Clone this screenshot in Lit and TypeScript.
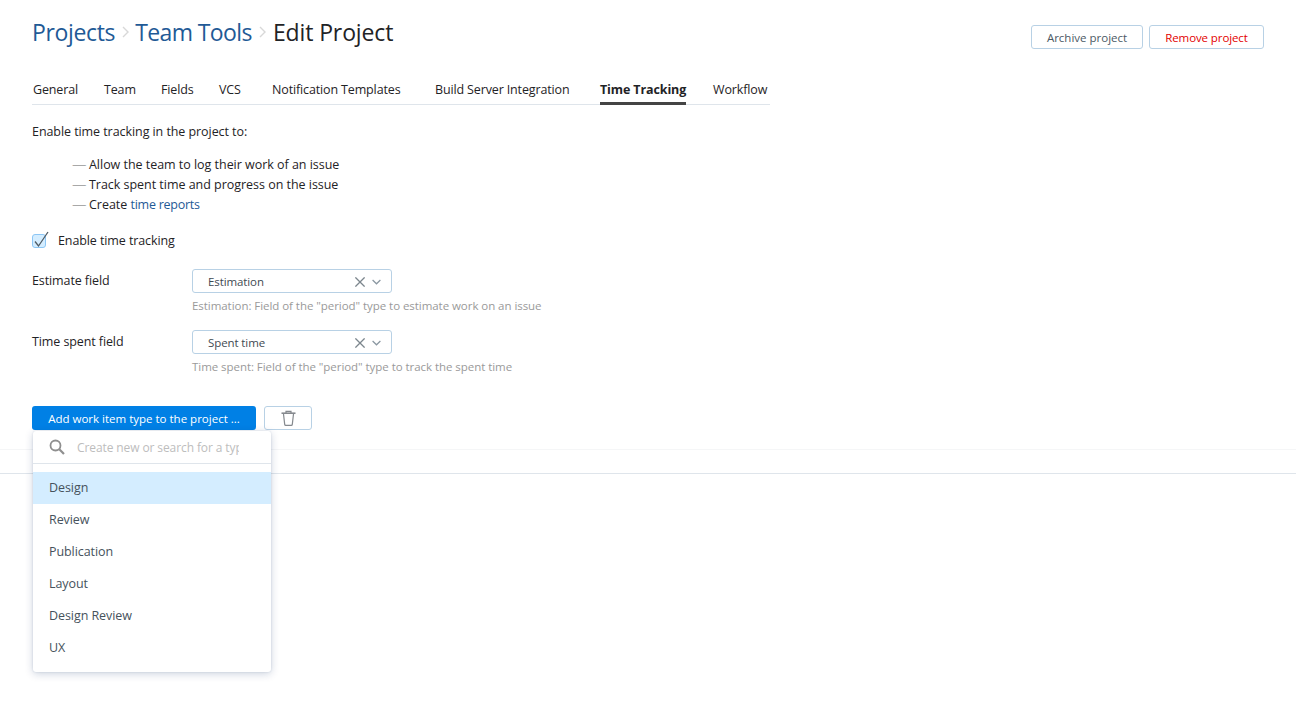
import { LitElement, html, css } from "lit";
import { customElement } from "lit/decorators.js";

const tabs: [string, number][] = [
  ["General", 71], ["Team", 57], ["Fields", 58], ["VCS", 53], ["Notification Templates", 163],
  ["Build Server Integration", 165], ["Time Tracking", 113], ["Workflow", 57],
];

@customElement("app-root")
export class AppRoot extends LitElement {
  static styles = css`
    :host { display: block; height: 707px; position: relative; overflow: hidden; background: #fff;
      font-family: "Open Sans", "Noto Sans", sans-serif; font-size: 12.5px; color: #1f2326; letter-spacing: -0.07px; }
    a { color: #1f5a96; text-decoration: none; }
    .content { padding: 0 32px; }
    .header { display: flex; justify-content: space-between; height: 50px; }
    .crumbs { display: flex; align-items: center; height: 32px; margin-top: 16px; font-size: 23px; letter-spacing: -0.35px; white-space: nowrap; }
    .crumbs svg { margin: 0 7px 0 7px; }
    .crumbs .mid { letter-spacing: -0.6px; margin-left: -1px; }
    .crumbs .last { letter-spacing: -0.12px; }
    .actions { display: flex; gap: 6px; padding-top: 25px; }
    .btn { box-sizing: border-box; height: 24px; border: 1px solid #b8d1e5; border-radius: 3px; display: flex; align-items: center;
      justify-content: center; background: #fff; color: #4b5964; font-size: 11.5px; letter-spacing: 0; }
    .archive { width: 112px; }
    .remove { width: 115px; color: #e30000; letter-spacing: -0.1px; }
    .tabs { display: flex; width: 738px; height: 30px; margin-top: 25px; box-sizing: border-box; border-bottom: 1px solid #dfe5eb; padding-left: 1px; letter-spacing: -0.14px; }
    .tab { height: 30px; box-sizing: border-box; padding-top: 6px; line-height: 17px; white-space: nowrap; }
    .tab span { display: inline-block; height: 24px; box-sizing: border-box; }
    .tab.active span { font-weight: 700; border-bottom: 3px solid #444; letter-spacing: -0.12px; }
    .intro { margin: 18px 0 0; line-height: 17px; }
    ul { list-style: none; margin: 15px 0 0; padding: 0 0 0 41px; line-height: 20px; letter-spacing: -0.03px; }
    ul a { letter-spacing: -0.25px; }
    li { display: flex; white-space: pre; }
    .dash { width: 17px; margin: -1px 0 1px -1px; color: #666; font-weight: 300; font-size: 14.5px; }
    .check { display: flex; align-items: center; gap: 12px; margin-top: 15px; height: 20px; letter-spacing: -0.1px; }
    .box { width: 14px; height: 14px; box-sizing: border-box; position: relative; border: 1px solid #8cc6f5; background: #d4edff; border-radius: 3px; margin-top: 2px; }
    .box svg { position: absolute; left: 0; top: -4px; overflow: visible; }
    .row { display: flex; margin-top: 19px; }
    .row + .row { margin-top: 16px; }
    .label { width: 160px; line-height: 17px; padding-top: 3px; letter-spacing: -0.1px; }
    .select { box-sizing: border-box; width: 200px; height: 24px; border: 1px solid #b8d1e5; border-radius: 3px; display: flex; align-items: center; padding: 0 10px 0 15px; color: #3f4a52; font-size: 11.5px; letter-spacing: -0.1px; }
    .select span { flex: 1; }
    .clear { margin-top: 1px; }
    .chev { margin: 2px 0 0 7px; }
    .hint { color: #9a9a9a; margin-top: 5px; line-height: 16px; font-size: 11.5px; letter-spacing: -0.05px; }
    .add-row { display: flex; gap: 8px; margin-top: 31px; }
    .primary { box-sizing: border-box; width: 224px; height: 24px; background: #0080e5; color: #fff; border-radius: 3px; display: flex; align-items: center; justify-content: center; white-space: nowrap; font-size: 11.5px; letter-spacing: 0; }
    .trash { width: 48px; }
    .rule1, .rule2 { position: absolute; left: 0; right: 0; height: 1px; }
    .rule1 { top: 449px; background: #f5f6f7; }
    .rule2 { top: 473px; background: #dfe5eb; }
    .menu { position: absolute; left: 33px; top: 431px; width: 238px; height: 241px; background: #fff; border-radius: 3px;
      box-shadow: 0 2px 8px rgba(0, 40, 100, .2), 0 0 2px rgba(0, 40, 100, .15); }
    .search { height: 32px; display: flex; align-items: center; border-bottom: 1px solid #dfe5eb; padding-left: 16px; gap: 12px; }
    .ph { color: #bdbdbd; width: 162px; overflow: hidden; white-space: nowrap; font-size: 12px; letter-spacing: -0.1px; }
    .items { padding-top: 8px; }
    .item { height: 32px; box-sizing: border-box; padding-bottom: 2px; display: flex; align-items: center; padding-left: 16px; color: #46525c; }
    .item.sel { background: #d4edff; }
  `;

  private chevron() {
    return html`<svg class="chev" width="9" height="6" viewBox="0 0 9 6" fill="none" stroke="#8a97a1" stroke-width="1.2"><path d="M.6 1 4.5 4.8 8.4 1"/></svg>`;
  }
  private clear() {
    return html`<svg class="clear" width="10" height="10" viewBox="0 0 10 10" fill="none" stroke="#7c868d" stroke-width="1.3"><path d="M.4.4l9.2 9.2M9.6.4 .4 9.6"/></svg>`;
  }
  private sep() {
    return html`<svg width="7" height="12" viewBox="0 0 7 12" fill="none" stroke="#d8d8d8" stroke-width="1.4"><path d="M1 1l5 5-5 5"/></svg>`;
  }

  render() {
    return html`
      <div class="content">
        <div class="header">
          <div class="crumbs"><a>Projects</a>${this.sep()}<a class="mid">Team Tools</a>${this.sep()}<span class="last">Edit Project</span></div>
          <div class="actions"><div class="btn archive">Archive project</div><div class="btn remove">Remove project</div></div>
        </div>
        <div class="tabs">
          ${tabs.map(([t, w]) => html`<div class="tab ${t === "Time Tracking" ? "active" : ""}" style="width:${w}px"><span>${t}</span></div>`)}
        </div>
        <p class="intro">Enable time tracking in the project to:</p>
        <ul>
          <li><span class="dash">—</span>Allow the team to log their work of an issue</li>
          <li><span class="dash">—</span>Track spent time and progress on the issue</li>
          <li><span class="dash">—</span>Create <a>time reports</a></li>
        </ul>
        <div class="check">
          <div class="box"><svg width="16" height="18" viewBox="0 0 16 18" fill="none" stroke="#4f5b64" stroke-width="1.3"><path d="M2 10.5 5.5 15 15 1"/></svg></div>
          <span>Enable time tracking</span>
        </div>
        <div class="row">
          <div class="label">Estimate field</div>
          <div>
            <div class="select"><span>Estimation</span>${this.clear()}${this.chevron()}</div>
            <div class="hint">Estimation: Field of the "period" type to estimate work on an issue</div>
          </div>
        </div>
        <div class="row">
          <div class="label">Time spent field</div>
          <div>
            <div class="select"><span>Spent time</span>${this.clear()}${this.chevron()}</div>
            <div class="hint">Time spent: Field of the "period" type to track the spent time</div>
          </div>
        </div>
        <div class="add-row">
          <div class="primary">Add work item type to the project ...</div>
          <div class="btn trash"><svg width="15" height="16" viewBox="0 0 15 16" fill="none" stroke="#85898e" stroke-width="1.2"><path d="M.5 3.2h14" stroke-width="1.6"/><path d="M5 3V1.3h5V3"/><path d="M2.5 4l1.2 10.4c.1.7.4 1 1 1h5.6c.6 0 .9-.3 1-1L12.5 4"/></svg></div>
        </div>
      </div>
      <div class="rule1"></div>
      <div class="rule2"></div>
      <div class="menu">
        <div class="search">
          <svg width="16" height="16" viewBox="0 0 16 16" fill="none" stroke="#8f8f8f" stroke-width="1.8"><circle cx="6.5" cy="6.5" r="5"/><path d="M10.3 10.3 15 15" stroke-width="2.2"/></svg>
          <div class="ph">Create new or search for a type</div>
        </div>
        <div class="items">
          ${["Design", "Review", "Publication", "Layout", "Design Review", "UX"].map((t, i) => html`<div class="item ${i === 0 ? "sel" : ""}">${t}</div>`)}
        </div>
      </div>
    `;
  }
}
